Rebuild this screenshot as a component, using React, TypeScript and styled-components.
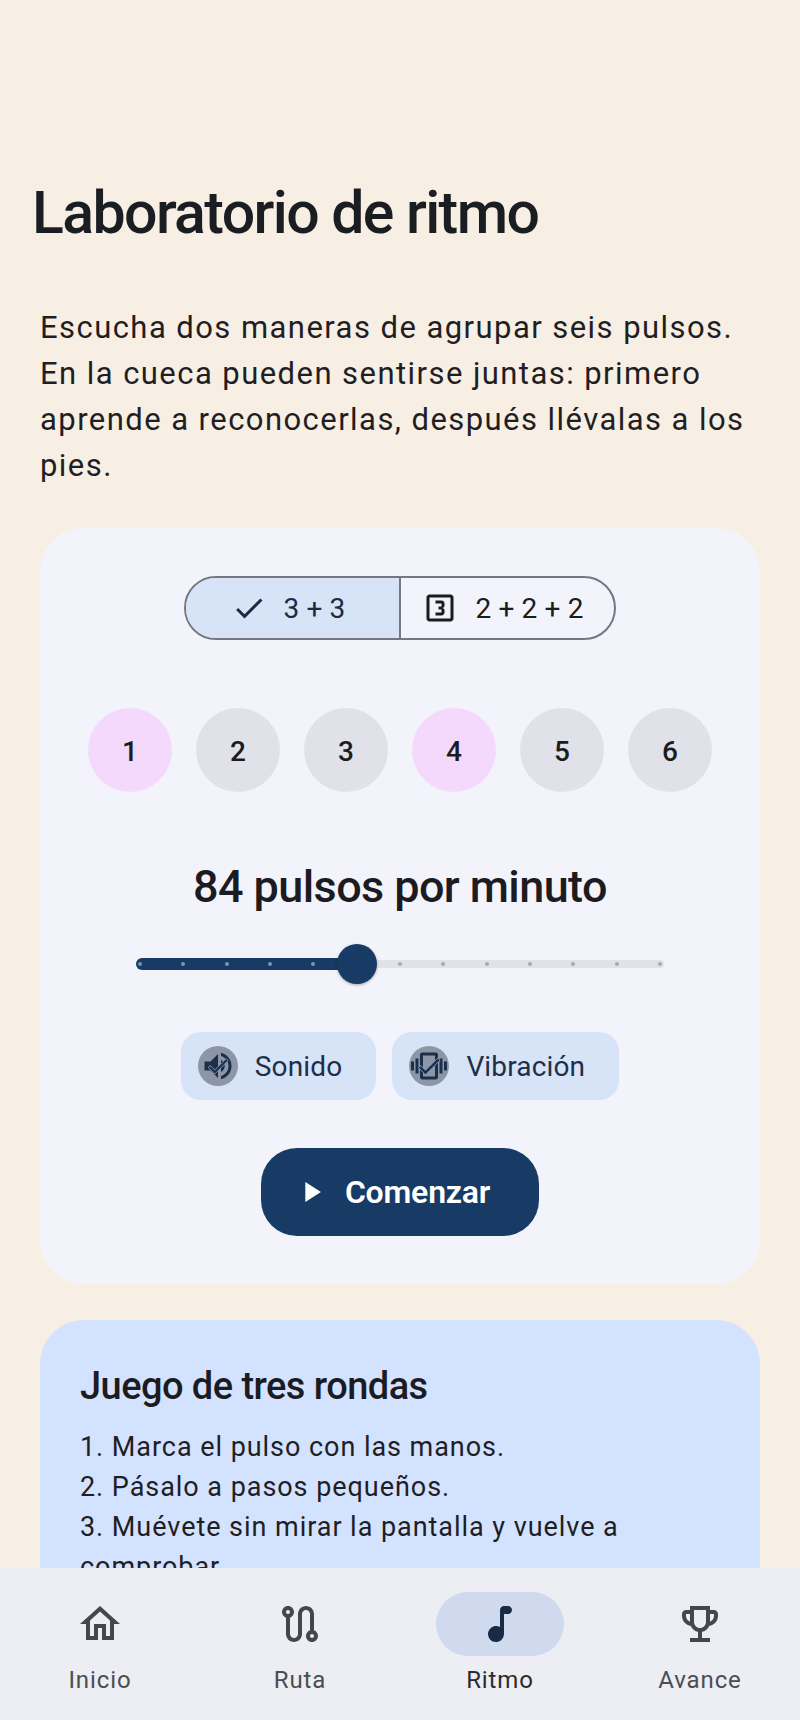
import { createGlobalStyle, styled } from 'styled-components';

const GlobalStyle = createGlobalStyle`
  html, body {
    margin: 0;
    padding: 0;
    height: 100%;
    overflow: hidden;
    background: #f7efe4;
    font-family: Roboto, "Liberation Sans", sans-serif;
  }
  * { box-sizing: border-box; }
`;

const PATHS = {
  check: 'M9 16.17L4.83 12l-1.42 1.41L9 19 21 7l-1.41-1.41z',
  looks3:
    'M19 3H5c-1.1 0-2 .9-2 2v14c0 1.1.9 2 2 2h14c1.1 0 2-.9 2-2V5c0-1.1-.9-2-2-2zm0 16H5V5h14v14zm-4-4v-1.5c0-.83-.67-1.5-1.5-1.5.83 0 1.5-.67 1.5-1.5V9c0-1.11-.9-2-2-2H9v2h4v2h-2v2h2v2H9v2h4c1.1 0 2-.89 2-2z',
  volume:
    'M3 9v6h4l5 5V4L7 9H3zm13.5 3c0-1.77-1.02-3.29-2.5-4.03v8.05c1.48-.73 2.5-2.25 2.5-4.02zM14 3.23v2.06c2.89.86 5 3.54 5 6.71s-2.11 5.85-5 6.71v2.06c4.01-.91 7-4.49 7-8.77s-2.99-7.86-7-8.77z',
  vibration:
    'M0 15h2V9H0v6zm3 2h2V7H3v10zm19-8v6h2V9h-2zm-3 8h2V7h-2v10zM16.5 3h-9C6.67 3 6 3.67 6 4.5v15c0 .83.67 1.5 1.5 1.5h9c.83 0 1.5-.67 1.5-1.5v-15c0-.83-.67-1.5-1.5-1.5zM16 19H8V5h8v14z',
  play: 'M8 5v14l11-7z',
  home: 'M12 5.69l5 4.5V18h-2v-6H9v6H7v-7.81l5-4.5M12 3L2 12h3v8h6v-6h2v6h6v-8h3L12 3z',
  route:
    'M19 15.18V7c0-2.21-1.79-4-4-4s-4 1.79-4 4v10c0 1.1-.9 2-2 2s-2-.9-2-2V8.82C8.16 8.4 9 7.3 9 6c0-1.66-1.34-3-3-3S3 4.34 3 6c0 1.3.84 2.4 2 2.82V17c0 2.21 1.79 4 4 4s4-1.79 4-4V7c0-1.1.9-2 2-2s2 .9 2 2v8.18c-1.16.41-2 1.51-2 2.82 0 1.66 1.34 3 3 3s3-1.34 3-3c0-1.3-.84-2.4-2-2.82zM6 7c-.55 0-1-.45-1-1s.45-1 1-1 1 .45 1 1-.45 1-1 1zm12 12c-.55 0-1-.45-1-1s.45-1 1-1 1 .45 1 1-.45 1-1 1z',
  music:
    'M12 5v8.55c-.94-.54-2.1-.75-3.33-.32-1.34.48-2.37 1.67-2.61 3.07-.46 2.74 1.86 5.08 4.59 4.65 1.96-.31 3.35-2.11 3.35-4.1V7h2c1.1 0 2-.9 2-2s-.9-2-2-2h-2c-1.1 0-2 .9-2 2z',
  trophy:
    'M19 5h-2V3H7v2H5c-1.1 0-2 .9-2 2v1c0 2.55 1.92 4.63 4.39 4.94.63 1.5 1.98 2.63 3.61 2.96V19H7v2h10v-2h-4v-3.1c1.63-.33 2.98-1.46 3.61-2.96C19.08 12.63 21 10.55 21 8V7c0-1.1-.9-2-2-2zM5 8V7h2v3.82C5.84 10.4 5 9.3 5 8zm7 6c-1.65 0-3-1.35-3-3V5h6v6c0 1.65-1.35 3-3 3zm7-6c0 1.3-.84 2.4-2 2.82V7h2v1z',
};

const Icon = ({ d, size, color }: { d: string; size: number; color: string }) => (
  <svg width={size} height={size} viewBox="0 0 24 24" fill={color} style={{ display: 'block', flexShrink: 0 }}>
    <path d={d} />
  </svg>
);

// chip avatar: the icon with the selected check painted over it
const CheckedIcon = ({ d, checkSize }: { d: string; checkSize: number }) => (
  <Layered>
    <Icon d={d} size={36} color="#1a2f4c" />
    <CheckOver>
      <svg width={checkSize} height={checkSize} viewBox="0 0 24 24" style={{ display: 'block' }}>
        <path d={PATHS.check} fill="#1a2f4c" stroke="#8d96a6" strokeWidth={1.2} paintOrder="stroke" />
      </svg>
    </CheckOver>
  </Layered>
);

const BEATS = [1, 2, 3, 4, 5, 6];
const TICKS = Array.from({ length: 13 }, (_, i) => i);
const THUMB_TICK = 5;

const NAV = [
  { label: 'Inicio', d: PATHS.home },
  { label: 'Ruta', d: PATHS.route },
  { label: 'Ritmo', d: PATHS.music, active: true },
  { label: 'Avance', d: PATHS.trophy },
];

const App = () => {
  return (
    <Screen>
      <GlobalStyle />
      <Content>
        <Title>Laboratorio de ritmo</Title>
        <Intro>
          Escucha dos maneras de agrupar seis pulsos. En la cueca pueden sentirse juntas: primero aprende a
          reconocerlas, después llévalas a los pies.
        </Intro>
        <LabCard>
          <Segmented>
            <Segment $selected>
              <Icon d={PATHS.check} size={36} color="#1a2b46" />
              3 + 3
            </Segment>
            <Segment>
              <Icon d={PATHS.looks3} size={36} color="#1a1c20" />
              2 + 2 + 2
            </Segment>
          </Segmented>
          <Beats>
            {BEATS.map((n) => (
              <Beat key={n} $accent={n === 1 || n === 4}>
                {n}
              </Beat>
            ))}
          </Beats>
          <Tempo>84 pulsos por minuto</Tempo>
          <Slider>
            <ActiveTrack />
            <Ticks>
              {TICKS.map((t) => (
                <Tick key={t} $active={t <= THUMB_TICK} />
              ))}
            </Ticks>
            <Thumb />
          </Slider>
          <Toggles>
            <Toggle>
              <ToggleIcon>
                <CheckedIcon d={PATHS.volume} checkSize={26} />
              </ToggleIcon>
              Sonido
            </Toggle>
            <Toggle>
              <ToggleIcon>
                <CheckedIcon d={PATHS.vibration} checkSize={28} />
              </ToggleIcon>
              Vibración
            </Toggle>
          </Toggles>
          <StartButton>
            <Icon d={PATHS.play} size={34} color="#ffffff" />
            Comenzar
          </StartButton>
        </LabCard>
        <GameCard>
          <GameTitle>Juego de tres rondas</GameTitle>
          <GameText>
            1. Marca el pulso con las manos.
            <br />
            2. Pásalo a pasos pequeños.
            <br />
            3. Muévete sin mirar la pantalla y vuelve a comprobar
          </GameText>
        </GameCard>
      </Content>
      <BottomNav>
        {NAV.map((item) => (
          <NavItem key={item.label}>
            <NavPill $active={item.active}>
              <Icon d={item.d} size={48} color={item.active ? '#182a45' : '#44484e'} />
            </NavPill>
            <NavLabel $active={item.active}>{item.label}</NavLabel>
          </NavItem>
        ))}
      </BottomNav>
    </Screen>
  );
};

const Screen = styled.div`
  width: 800px;
  height: 1720px;
  display: flex;
  flex-direction: column;
  overflow: hidden;
`;

const Content = styled.main`
  flex: 1;
  min-height: 0;
  overflow: hidden;
  padding: 173px 40px 0;
`;

const Title = styled.h1`
  margin: 0 0 0 -8px;
  font-size: 59px;
  line-height: 80px;
  font-weight: 500;
  letter-spacing: -1.6px;
  color: #1a1d21;
`;

const Intro = styled.p`
  margin: 52px 0 0;
  font-size: 31px;
  line-height: 46px;
  letter-spacing: 1.44px;
  color: #1f1e23;
`;

const LabCard = styled.section`
  margin-top: 39px;
  height: 756px;
  border-radius: 44px;
  background: #f2f3fb;
  padding-top: 48px;
  display: flex;
  flex-direction: column;
  align-items: center;
`;

const Segmented = styled.div`
  display: flex;
  height: 64px;
  border: 2px solid #74777f;
  border-radius: 32px;
  overflow: hidden;
`;

const Segment = styled.div<{ $selected?: boolean }>`
  display: flex;
  align-items: center;
  justify-content: center;
  gap: 17px;
  width: 213px;
  padding-right: 9px;
  font-size: 28px;
  letter-spacing: 0.15px;
  color: ${(p) => (p.$selected ? '#1a2b46' : '#1a1c20')};
  background: ${(p) => (p.$selected ? '#d7e3f7' : 'transparent')};
  & + & {
    width: 215px;
    border-left: 2px solid #74777f;
  }
`;

const Beats = styled.div`
  margin-top: 68px;
  display: flex;
  gap: 24px;
`;

const Beat = styled.div<{ $accent?: boolean }>`
  width: 84px;
  height: 84px;
  padding-top: 2px;
  border-radius: 50%;
  display: flex;
  align-items: center;
  justify-content: center;
  font-size: 28px;
  font-weight: 500;
  color: #1a1c20;
  background: ${(p) => (p.$accent ? '#f5d9fc' : '#e1e2e9')};
`;

const Tempo = styled.h2`
  margin: 67px 0 0;
  font-size: 45px;
  line-height: 56px;
  font-weight: 500;
  letter-spacing: -0.6px;
  color: #1c1b1f;
`;

const Slider = styled.div`
  position: relative;
  margin-top: 45px;
  width: 528px;
  height: 8px;
  border-radius: 4px;
  background: #e1e2e9;
`;

const ActiveTrack = styled.div`
  position: absolute;
  left: 0;
  top: -2px;
  width: 220px;
  height: 12px;
  border-radius: 6px;
  background: #173b64;
`;

const Ticks = styled.div`
  position: absolute;
  left: 2px;
  right: 2px;
  top: 2px;
  display: flex;
  justify-content: space-between;
`;

const Tick = styled.span<{ $active?: boolean }>`
  width: 4px;
  height: 4px;
  border-radius: 50%;
  background: ${(p) => (p.$active ? '#8292a8' : '#a9aab0')};
`;

const Thumb = styled.div`
  position: absolute;
  left: 201px;
  top: -16px;
  width: 40px;
  height: 40px;
  border-radius: 50%;
  background: #173b64;
  box-shadow: 0 1px 3px rgba(0, 0, 0, 0.3);
`;

const Toggles = styled.div`
  margin-top: 64px;
  display: flex;
  gap: 16px;
`;

const Toggle = styled.div`
  height: 68px;
  border-radius: 20px;
  background: #d7e3f7;
  display: flex;
  align-items: center;
  gap: 17px;
  padding: 0 34px 0 17px;
  font-size: 28px;
  letter-spacing: 0.15px;
  color: #1d2f4a;
`;

const ToggleIcon = styled.span`
  width: 40px;
  height: 40px;
  border-radius: 50%;
  background: #8d96a6;
  display: flex;
  align-items: center;
  justify-content: center;
`;

const Layered = styled.span`
  position: relative;
  display: block;
`;

const CheckOver = styled.span`
  position: absolute;
  inset: 0;
  display: flex;
  align-items: center;
  justify-content: center;
`;

const StartButton = styled.button`
  margin-top: 48px;
  width: 278px;
  height: 88px;
  border: 0;
  border-radius: 36px;
  background: #173b64;
  color: #ffffff;
  display: flex;
  align-items: center;
  justify-content: center;
  gap: 17px;
  padding: 0 16px 0 0;
  font-family: inherit;
  font-size: 32px;
  font-weight: 600;
  letter-spacing: -0.2px;
`;

const GameCard = styled.section`
  margin-top: 36px;
  border-radius: 44px;
  background: #d3e2ff;
  padding: 44px 40px;
`;

const GameTitle = styled.h3`
  margin: 0;
  font-size: 38px;
  line-height: 44px;
  font-weight: 500;
  letter-spacing: -0.55px;
  color: #1c1b1f;
`;

const GameText = styled.p`
  margin: 19px 0 0;
  font-size: 27px;
  line-height: 40px;
  letter-spacing: 0.95px;
  color: #1f1e23;
`;

const BottomNav = styled.nav`
  height: 152px;
  flex-shrink: 0;
  background: #eceef4;
  display: grid;
  grid-template-columns: repeat(4, 1fr);
  padding-top: 24px;
`;

const NavItem = styled.div`
  display: flex;
  flex-direction: column;
  align-items: center;
`;

const NavPill = styled.div<{ $active?: boolean }>`
  width: 128px;
  height: 64px;
  border-radius: 32px;
  display: flex;
  align-items: center;
  justify-content: center;
  background: ${(p) => (p.$active ? '#cfdaef' : 'transparent')};
`;

const NavLabel = styled.span<{ $active?: boolean }>`
  margin-top: 8px;
  font-size: 24px;
  line-height: 32px;
  letter-spacing: 0.9px;
  color: ${(p) => (p.$active ? '#2a2c30' : '#4a4d53')};
`;

export default App;
